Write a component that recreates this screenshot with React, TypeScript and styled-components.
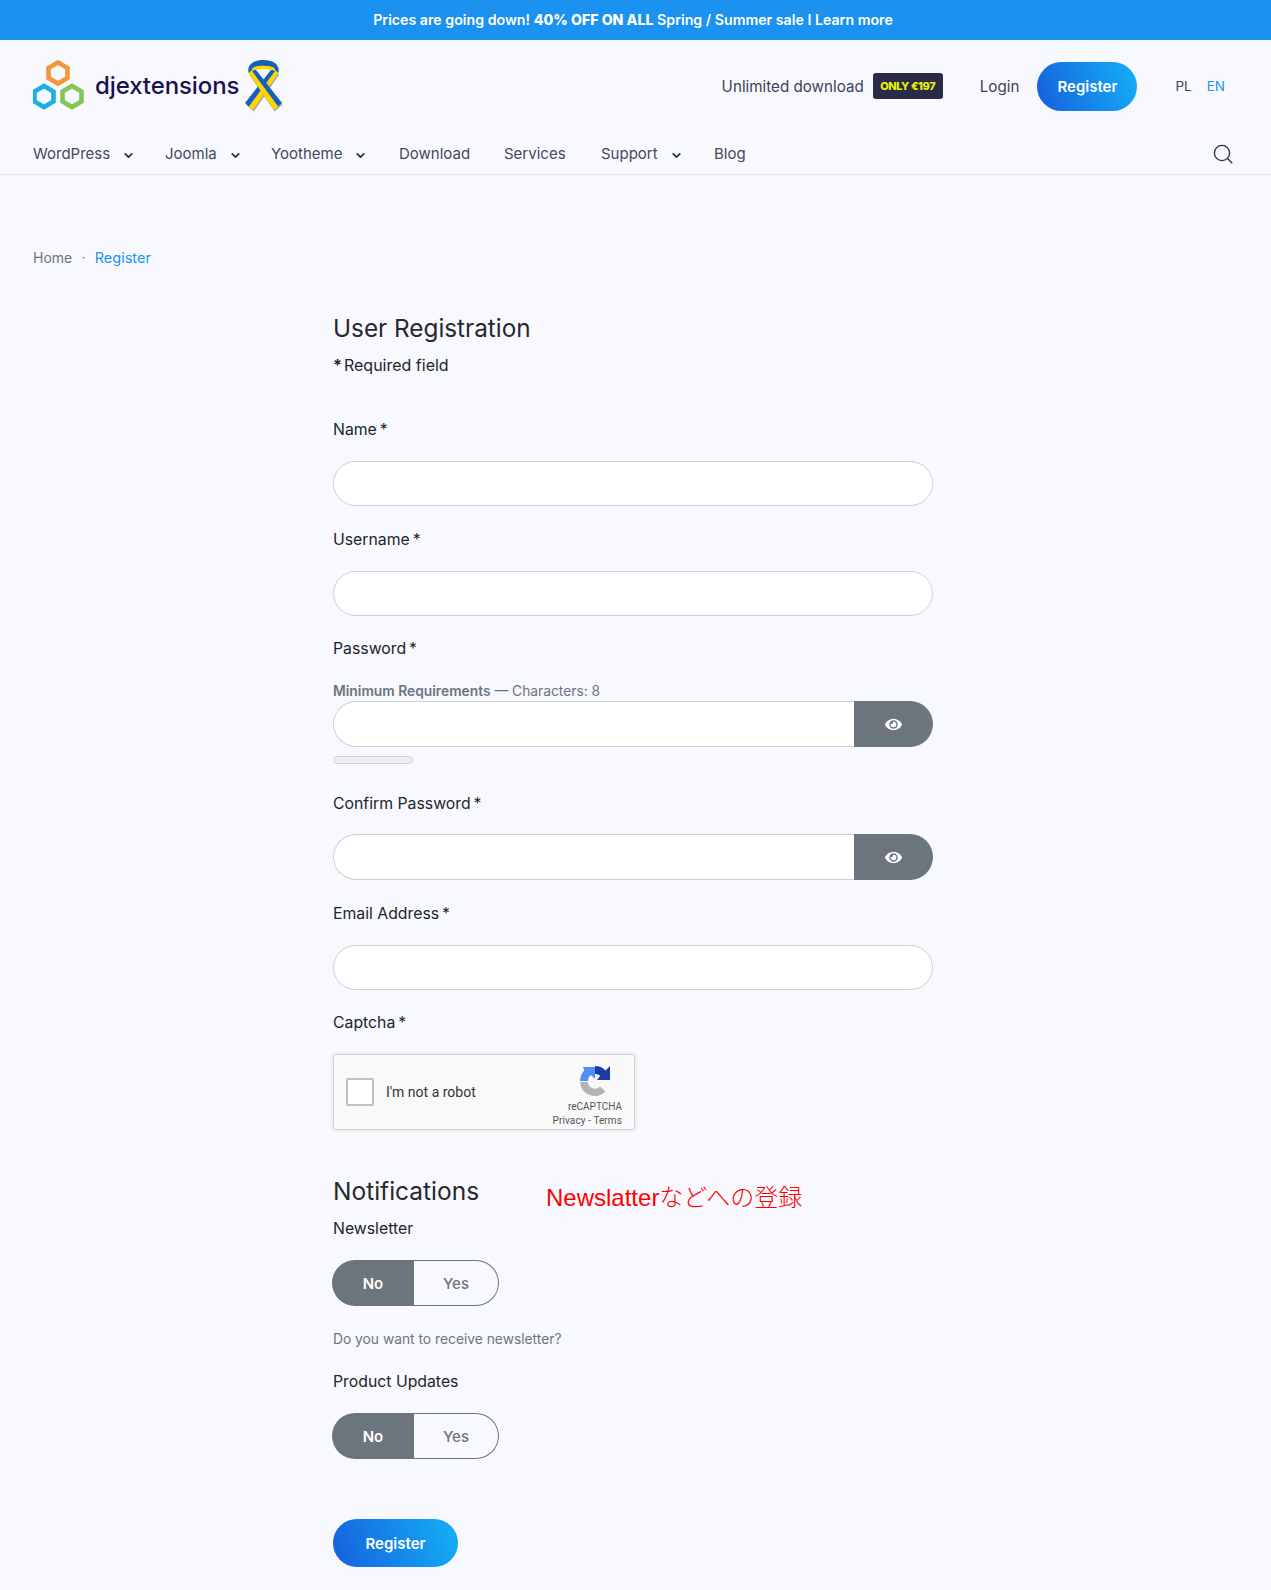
import React from "react";
import styled, { createGlobalStyle } from "styled-components";
import { ChevronDown } from "lucide-react";
import { FaEye } from "react-icons/fa";

const Global = createGlobalStyle`
  html, body { margin: 0; padding: 0; background: #f8f9fe; }
  body { font-family: Inter, "Noto Sans", sans-serif; color: #212529; height: 1590px; overflow: hidden; }
  * { box-sizing: border-box; }
`;

const Page = styled.div`
  position: relative;
  width: 1271px;
  height: 1590px;
  background: #f8f9fe;
`;

const Banner = styled.div`
  height: 40px;
  padding: 0 5px 2px 0;
  background: #1b91f0;
  color: #fff;
  display: flex;
  align-items: center;
  justify-content: center;
  font-size: 14.2px;
  font-weight: 600;
  b { font-weight: 800; }
`;

const Header = styled.header`
  height: 135px;
  border-bottom: 1px solid #e4e5ee;
  padding: 0 46px 0 33px;
  display: flex;
  flex-direction: column;
`;

const TopRow = styled.div`
  height: 92px;
  display: flex;
  align-items: center;
  justify-content: space-between;
`;

const Logo = styled.div`
  display: flex;
  align-items: center;
  margin-top: -3px;
`;

const LogoText = styled.span`
  font-size: 24px;
  font-weight: 500;
  color: #1b1250;
  margin: 0 5px 0 10px;
  padding-top: 2px;
  letter-spacing: -0.1px;
`;

const RibbonMark = styled.svg`
  margin-top: 4px;
`;

const Actions = styled.div`
  display: flex;
  align-items: center;
  font-size: 15.2px;
  color: #3a4358;
`;

const Price = styled.span`
  width: 70px;
  height: 26px;
  margin: 0 37px 0 9px;
  background: #2c2b45;
  border-radius: 3px;
  color: #e4f500;
  font-size: 11px;
  font-weight: 800;
  letter-spacing: -0.4px;
  display: flex;
  align-items: center;
  justify-content: center;
`;

const GradientButton = styled.button<{ $w: number; $h: number }>`
  width: ${(p) => p.$w}px;
  height: ${(p) => p.$h}px;
  border: 0;
  border-radius: 25px;
  background: linear-gradient(70deg, #1560dc 0%, #15b0f7 100%);
  color: #fff;
  font-family: inherit;
  font-size: 15px;
  font-weight: 600;
  padding: 0;
`;

const Login = styled.span`
  margin-right: 18px;
`;

const Lang = styled.span<{ $active?: boolean }>`
  font-size: 13.5px;
  color: ${(p) => (p.$active ? "#2196f3" : "#3a4358")};
  margin-left: ${(p) => (p.$active ? 15 : 38)}px;
`;

const Nav = styled.nav`
  height: 42px;
  margin-right: -8px;
  display: flex;
  align-items: center;
  font-size: 15px;
  color: #3f4a5f;
`;

const NavItem = styled.span<{ $w: number }>`
  width: ${(p) => p.$w}px;
  display: flex;
  align-items: center;
  gap: 12px;
  svg { margin-top: 4px; color: #2a3347; }
`;

const SearchButton = styled.span`
  margin-left: auto;
  margin-top: 2px;
  display: flex;
`;

const Main = styled.main`
  padding: 73px 33px 0;
`;

const Crumbs = styled.div`
  display: flex;
  align-items: center;
  font-size: 14px;
  line-height: 20px;
  color: #6c757d;
  span:last-child { color: #2196f3; font-size: 14.5px; }
  i { font-style: normal; margin: 0 9.500px; font-size: 12px; }
`;

const Form = styled.form`
  width: 600px;
  margin: 45px 0 0 300px;
`;

const Title = styled.h1`
  margin: 0;
  font-size: 24.3px;
  line-height: 30px;
  font-weight: 400;
  color: #25292e;
`;

const Required = styled.div`
  margin-top: 12px;
  font-size: 16px;
  line-height: 20px;
  height: 63px;
  b { font-weight: 700; margin-right: -2.500px; }
`;

const Label = styled.label<{ $top?: number }>`
  display: block;
  margin-top: ${(p) => p.$top ?? 0}px;
  height: 22px;
  line-height: 24px;
  font-size: 15.8px;
  color: #212529;
`;

const Star = styled.span`
  margin-left: -1.500px;
`;

const Input = styled.div<{ $flat?: boolean }>`
  height: 45px;
  margin-top: 21px;
  border: 1px solid #ced0d8;
  border-radius: ${(p) => (p.$flat ? "23px 0 0 23px" : "23px")};
  background: #fff;
  ${(p) => p.$flat && "flex: 1; height: auto; margin-top: 0; border-right: 0;"}
`;

const Field = styled.div`
  height: 110px;
`;

const Hint = styled.div`
  margin-top: 23px;
  font-size: 13.8px;
  line-height: 19px;
  color: #6c757d;
  b { font-weight: 600; }
`;

const InputGroup = styled.div<{ $top: number }>`
  display: flex;
  height: 46px;
  margin-top: ${(p) => p.$top}px;
`;

const EyeButton = styled.div`
  width: 79px;
  background: #6c757d;
  border-radius: 0 23px 23px 0;
  color: #fff;
  display: flex;
  align-items: center;
  justify-content: center;
`;

const Meter = styled.div`
  width: 80px;
  height: 8px;
  margin-top: 9px;
  background: #eee;
  border: 1px solid #ced0d8;
  border-radius: 4px;
`;

const Captcha = styled.div`
  width: 302px;
  height: 76px;
  margin-top: 21px;
  background: #f9f9f9;
  border: 1px solid #d3d3d3;
  border-radius: 3px;
  box-shadow: 0 0 4px 1px rgba(0, 0, 0, 0.08);
  display: flex;
  align-items: center;
  padding: 0 12px;
  font-family: Roboto, sans-serif;
  color: #000;
`;

const CaptchaBox = styled.span`
  width: 28px;
  height: 28px;
  background: #fff;
  border: 2px solid #c1c1c1;
  border-radius: 2px;
`;

const CaptchaLabel = styled.span`
  font-size: 14px;
  margin-left: 12px;
  color: #333;
`;

const CaptchaBrand = styled.div`
  margin: 11px 0 0 auto;
  align-self: flex-start;
  display: flex;
  flex-direction: column;
  align-items: flex-end;
  color: #555;
  font-size: 10px;
  line-height: 14px;
  svg { margin: 0 12px 4px 0; }
  small { font-size: 10px; line-height: 14px; letter-spacing: 0.1px; display: block; }
`;

const SectionTitle = styled.h2`
  margin: 45px 0 0;
  font-size: 24.5px;
  line-height: 32px;
  font-weight: 400;
  color: #25292e;
`;

const Toggle = styled.div<{ $top: number }>`
  width: 167px;
  height: 46px;
  margin: ${(p) => p.$top}px 0 0 -1px;
  display: flex;
  font-size: 15px;
`;

const ToggleOption = styled.span<{ $on?: boolean }>`
  width: ${(p) => (p.$on ? 82 : 85)}px;
  background: ${(p) => (p.$on ? "#6c757d" : "transparent")};
  color: ${(p) => (p.$on ? "#fff" : "#6c757d")};
  font-weight: ${(p) => (p.$on ? 600 : 500)};
  border-radius: ${(p) => (p.$on ? "23px 0 0 23px" : "0 23px 23px 0")};
  border: ${(p) => (p.$on ? "0" : "1px solid #6c757d")};
  ${(p) => !p.$on && "border-left: 0;"}
  display: flex;
  align-items: center;
  justify-content: center;
`;

const Help = styled.div`
  margin-top: 23px;
  height: 20px;
  line-height: 20px;
  font-size: 13.8px;
  color: #6c757d;
`;

const Annotation = styled.div`
  position: absolute;
  left: 546px;
  top: 1183px;
  font-family: "Liberation Sans", "Noto Sans CJK JP", sans-serif;
  font-size: 24px;
  font-weight: 300;
  line-height: 30px;
  color: #f00;
`;

const Submit = styled.div`
  margin-top: 60px;
`;

const LogoMark = () => (
  <svg width="52" height="50" viewBox="0 0 52 50" fill="none" strokeWidth="4.6">
    <path d="M25 2.500l9.500 5.500v10l-9.500 5.500-9.500-5.500V8z" stroke="#f7953a" />
    <path d="M11 26l9.500 5.500v10L11 47l-9.500-5.500v-10z" stroke="#1cb0e6" />
    <path d="M39 26l9.500 5.500v10L39 47l-9.500-5.500v-10z" stroke="#85c557" />
  </svg>
);

const Ribbon = () => (
  <RibbonMark width="39" height="54" viewBox="0 0 39 54">
    <path d="M28.500 8L1 43l8 7 25.500-37z" fill="#a8a8a8" transform="translate(0.800 1.600)" />
    <path d="M10.500 8L38 43l-8 7L4.500 13z" fill="#a8a8a8" transform="translate(0.600 1.600)" />
    <path d="M28.500 8l3 2.500L5 46.500 1 43z" fill="#1560bd" />
    <path d="M31.500 10.500l3 2.500L9 50l-4-3.500z" fill="#ffd500" />
    <path d="M10.500 8L38 43l-4 3.500-26.500-36z" fill="#1560bd" />
    <path d="M7.500 10.500L34 46.500 30 50 4.500 13z" fill="#ffd500" />
    <path d="M4.500 13C3 4 10 0 19.500 0S36 4 34.500 13l-3-2.500C30 7 25 6 19.500 6S9 7 7.500 10.500z" fill="#1560bd" />
    <path d="M8.500 8C12 5 27 5 30.500 8l.5 3C27 8.500 12 8.500 8 11z" fill="#ffd500" />
  </RibbonMark>
);

const SearchIcon = () => (
  <svg width="20" height="20" viewBox="0 0 20 20" fill="none" stroke="#2a3347" strokeWidth="1.4">
    <circle cx="9" cy="9" r="7.600" />
    <path d="M14.600 14.600l4.600 4.600" />
  </svg>
);

const RecaptchaIcon = () => (
  <svg width="30" height="30" viewBox="0 0 30 30">
    <path d="M0 16h8a7 7 0 0 0 12 4.500l5.600 5.100A15 15 0 0 1 0 16z" fill="#b3b3b3" />
    <path d="M0 15A15 15 0 0 1 4.400 4.400L3 1h12v12l-4-4A7 7 0 0 0 8 15z" fill="#4a90f5" />
    <path d="M15 0a15 15 0 0 1 10.600 4.400L30 0v14H17l3.300-4.300A7 7 0 0 0 15 8z" fill="#1c3aa9" />
  </svg>
);

const Chevron = () => <ChevronDown size={13} strokeWidth={3.4} />;

export default function App() {
  return (
    <Page>
      <Global />
      <Banner>
        <span>
          Prices are going down! <b>40% OFF ON ALL</b> Spring / Summer sale I Learn more
        </span>
      </Banner>
      <Header>
        <TopRow>
          <Logo>
            <LogoMark />
            <LogoText>djextensions</LogoText>
            <Ribbon />
          </Logo>
          <Actions>
            Unlimited download
            <Price>ONLY €197</Price>
            <Login>Login</Login>
            <GradientButton type="button" $w={100} $h={49}>Register</GradientButton>
            <Lang>PL</Lang>
            <Lang $active>EN</Lang>
          </Actions>
        </TopRow>
        <Nav>
          <NavItem $w={132}>WordPress <Chevron /></NavItem>
          <NavItem $w={106}>Joomla <Chevron /></NavItem>
          <NavItem $w={128}>Yootheme <Chevron /></NavItem>
          <NavItem $w={105}>Download</NavItem>
          <NavItem $w={97}>Services</NavItem>
          <NavItem $w={113}>Support <Chevron /></NavItem>
          <NavItem $w={50}>Blog</NavItem>
          <SearchButton><SearchIcon /></SearchButton>
        </Nav>
      </Header>
      <Main>
        <Crumbs>
          <span>Home</span>
          <i>·</i>
          <span>Register</span>
        </Crumbs>
        <Form>
          <Title>User Registration</Title>
          <Required><b>*</b> Required field</Required>
          <Field>
            <Label>Name <Star>*</Star></Label>
            <Input />
          </Field>
          <Field>
            <Label>Username <Star>*</Star></Label>
            <Input />
          </Field>
          <Label $top={-1}>Password <Star>*</Star></Label>
          <Hint><b>Minimum Requirements</b> — Characters: 8</Hint>
          <InputGroup $top={0}>
            <Input $flat />
            <EyeButton><FaEye size={17} /></EyeButton>
          </InputGroup>
          <Meter />
          <Label $top={28}>Confirm Password <Star>*</Star></Label>
          <InputGroup $top={20}>
            <Input $flat />
            <EyeButton><FaEye size={17} /></EyeButton>
          </InputGroup>
          <Label $top={22}>Email Address <Star>*</Star></Label>
          <Input />
          <Label $top={21}>Captcha <Star>*</Star></Label>
          <Captcha>
            <CaptchaBox />
            <CaptchaLabel>I'm not a robot</CaptchaLabel>
            <CaptchaBrand>
              <RecaptchaIcon />
              <span>reCAPTCHA</span>
              <small>Privacy - Terms</small>
            </CaptchaBrand>
          </Captcha>
          <SectionTitle>Notifications</SectionTitle>
          <Label $top={10}>Newsletter</Label>
          <Toggle $top={21}>
            <ToggleOption $on>No</ToggleOption>
            <ToggleOption>Yes</ToggleOption>
          </Toggle>
          <Help>Do you want to receive newsletter?</Help>
          <Label $top={21}>Product Updates</Label>
          <Toggle $top={21}>
            <ToggleOption $on>No</ToggleOption>
            <ToggleOption>Yes</ToggleOption>
          </Toggle>
          <Submit>
            <GradientButton type="button" $w={125} $h={48}>Register</GradientButton>
          </Submit>
        </Form>
      </Main>
      <Annotation>Newslatterなどへの登録</Annotation>
    </Page>
  );
}
